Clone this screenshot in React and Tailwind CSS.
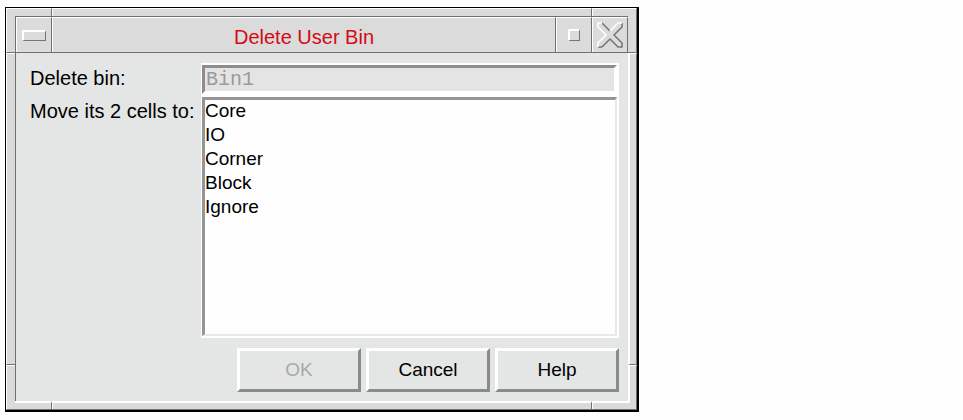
const BINS = ['Core', 'IO', 'Corner', 'Block', 'Ignore'];

function SideRail({ side }) {
  const left = side === 'left';
  const edge = left ? 'border-l border-l-white' : 'border-r border-r-[#6f6f6f]';
  const inner = left ? '' : 'border-l-2 border-l-white';
  return (
    <div className="flex w-[9px] shrink-0 flex-col bg-[#d9dada]">
      <div className={`h-[37px] border-b border-b-[#6f6f6f] ${edge}`} />
      <div className={`flex-1 border-t border-b border-t-white border-b-[#6f6f6f] ${edge} ${inner}`} />
      <div className={`h-9 border-t border-t-white ${edge} ${inner}`} />
    </div>
  );
}

function TopRail() {
  return (
    <div className="flex h-2 bg-[#d9dada]">
      <div className="w-[46px] border-t border-r border-l border-t-white border-r-[#6f6f6f] border-l-white" />
      <div className="flex-1 border-t border-r border-l border-t-white border-r-[#6f6f6f] border-l-white" />
      <div className="w-[45px] border-t border-r border-l border-t-white border-r-[#6f6f6f] border-l-white" />
    </div>
  );
}

function BottomRail() {
  return (
    <div className="flex h-[9px] border-b border-l border-b-[#6f6f6f] border-l-white bg-[#d9dada]">
      <div className="w-2" />
      <div className="w-[37px] border-t-2 border-r border-t-white border-r-[#6f6f6f]" />
      <div className="flex-1 border-t-2 border-r border-l border-t-white border-r-[#6f6f6f] border-l-white" />
      <div className="w-[38px] border-t-2 border-l border-t-white border-l-white" />
      <div className="w-[7px] border-r border-r-[#6f6f6f]" />
    </div>
  );
}

function TitleBar() {
  const cell =
    'flex w-9 shrink-0 items-center justify-center border-t border-r border-l border-t-white border-r-[#6f6f6f] border-l-white';
  return (
    <header className="flex h-9 border-b border-b-[#6f6f6f] bg-[#dadbda]">
      <button type="button" aria-label="Window menu" className={cell}>
        <span className="h-[11px] w-6 border-t-2 border-r border-b border-l-2 border-t-white border-r-[#777] border-b-[#777] border-l-white" />
      </button>
      <h1 className="flex flex-1 items-center justify-center border-t border-r border-l border-t-white border-r-[#6f6f6f] border-l-white pt-1 text-[20px] leading-6 text-[#d40b14]">
        Delete User Bin
      </h1>
      <button type="button" aria-label="Maximize" className={cell}>
        <span className="size-3 border-t-2 border-r border-b border-l-2 border-t-white border-r-[#777] border-b-[#777] border-l-white" />
      </button>
      <button type="button" aria-label="Close" className={cell}>
        <svg width="28" height="28" viewBox="0 0 28 28" fill="none" strokeWidth="1.6" strokeLinejoin="round">
          <path
            d="M6 26 14 18 22 26H26V22L18 14 26 6V2M6 2 14 10M2 26H6"
            stroke="#777"
          />
          <path d="M6 2H2V6L10 14 2 22V26M14 10 22 2H26" stroke="#fff" />
        </svg>
      </button>
    </header>
  );
}

function PushButton({ children, disabled }) {
  return (
    <button
      type="button"
      disabled={disabled}
      className="h-11 w-[124px] border-[3px] border-t-white border-r-[#8a8a8a] border-b-[#8a8a8a] border-l-white pt-px text-[19px] text-black disabled:text-[#a9a9a9]"
    >
      {children}
    </button>
  );
}

export default function App() {
  return (
    <main className="min-h-screen bg-[#fefefe] pt-[7px] pl-[5px] font-['Liberation_Sans',Arial,sans-serif] text-[20px] text-black">
      <section className="w-full max-w-[634px] border-t border-r-2 border-b-2 border-l border-black">
        <TopRail />
        <div className="flex">
          <SideRail side="left" />
          <div className="min-w-0 flex-1 border-t border-l border-[#6f6f6f]">
            <TitleBar />
            <form className="bg-[#e4e5e5] pt-[10px] pr-[9px] pb-[9px] pl-[14px]">
              <div className="grid grid-cols-[171px_1fr]">
                <label htmlFor="bin" className="pt-[3px] leading-6">
                  Delete bin:
                </label>
                <div className="border-t-2 border-r-2 border-b border-l border-white">
                  <input
                    id="bin"
                    disabled
                    defaultValue="Bin1"
                    className="block h-[29px] w-full border-[3px] border-t-[#8e8c8c] border-r-white border-b-white border-l-[#8e8c8c] bg-[#e4e4e5] px-px font-['Liberation_Mono','Courier_New',monospace] text-[20px] leading-6 text-[#9a9a9a]"
                  />
                </div>
                <label htmlFor="target" className="pt-1 leading-6">
                  Move its 2 cells to:
                </label>
                <div className="border-t-2 border-r-2 border-b-2 border-l border-white">
                  <select
                    id="target"
                    size={10}
                    className="block h-[239px] w-full appearance-none overflow-hidden border-t-[3px] border-r-2 border-b-2 border-l-[3px] border-t-[#969494] border-r-[#e9e9e9] border-b-[#e9e9e9] border-l-[#969494] bg-[#fefefe] p-0 outline-none"
                  >
                    {BINS.map((bin) => (
                      <option key={bin} className="h-6 p-0 text-[19px] leading-6">
                        {bin}
                      </option>
                    ))}
                  </select>
                </div>
              </div>
              <div className="mt-[10px] flex justify-end gap-[5px]">
                <PushButton disabled>OK</PushButton>
                <PushButton>Cancel</PushButton>
                <PushButton>Help</PushButton>
              </div>
            </form>
          </div>
          <SideRail side="right" />
        </div>
        <BottomRail />
      </section>
    </main>
  );
}
